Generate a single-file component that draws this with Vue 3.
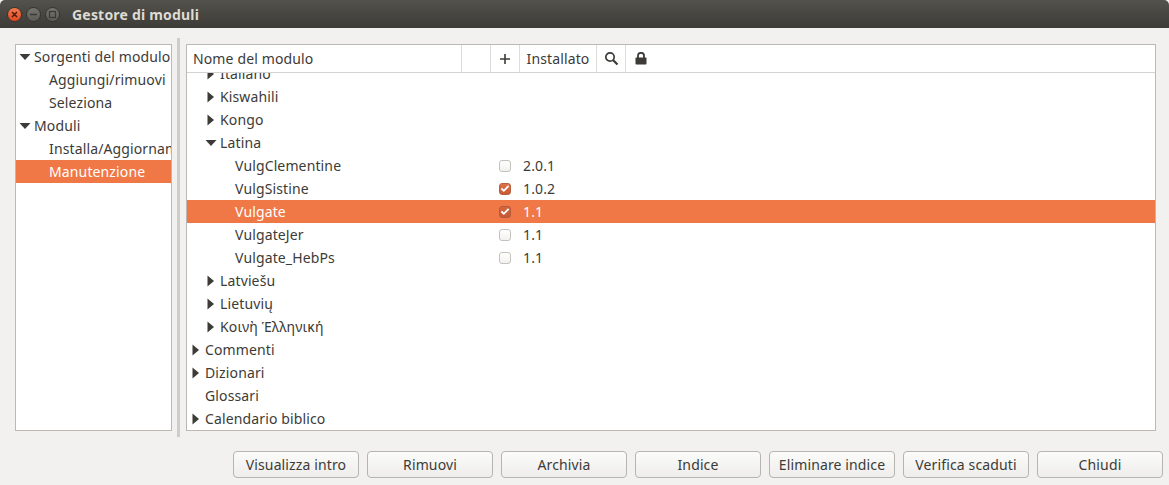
<template>
  <div class="window">
    <div class="titlebar">
      <div class="controls">
        <span class="ctl close">
          <svg width="9" height="9" viewBox="0 0 9 9"><path d="M2 2l5 5M7 2L2 7" stroke="#4a1a0c" stroke-width="1.5" /></svg>
        </span>
        <span class="ctl">
          <svg width="9" height="9" viewBox="0 0 9 9"><path d="M1 4.5h7" stroke="#3a3934" stroke-width="1.4" /></svg>
        </span>
        <span class="ctl">
          <svg width="9" height="9" viewBox="0 0 9 9"><rect x="1.5" y="1.5" width="6" height="6" fill="none" stroke="#3a3934" stroke-width="1.2" /></svg>
        </span>
      </div>
      <span class="title">Gestore di moduli</span>
    </div>

    <div class="content">
      <div class="panes">
        <div class="sidebar">
          <div
            v-for="item in sideItems"
            :key="item.label"
            class="row"
            :class="{ selected: item.selected }"
          >
            <span class="arrow-slot side-slot" :class="{ deep: item.child }">
              <svg v-if="item.open" class="arrow" width="14" height="10" viewBox="0 0 14 10"><path d="M1.5 2h11L7 8z" fill="#3c3b37" /></svg>
            </span>
            <span class="label">{{ item.label }}</span>
          </div>
        </div>

        <div class="handle"></div>

        <div class="tree">
          <div class="header">
            <div class="hcol h-name">Nome del modulo</div>
            <div class="hcol h-blank"></div>
            <div class="hcol h-plus">
              <svg width="12" height="12" viewBox="0 0 12 12"><path d="M6 1v10M1 6h10" stroke="#3c3b37" stroke-width="1.6" /></svg>
            </div>
            <div class="hcol h-inst">Installato</div>
            <div class="hcol h-icon">
              <svg width="15" height="15" viewBox="0 0 15 15"><circle cx="6" cy="6" r="4.2" fill="none" stroke="#3c3b37" stroke-width="1.7" /><path d="M9 9l4.5 4.5" stroke="#3c3b37" stroke-width="2.2" /></svg>
            </div>
            <div class="hcol h-icon h-last">
              <svg width="12" height="13" viewBox="0 0 12 13"><path d="M3 6V3.8a3 3 0 0 1 6 0V6" fill="none" stroke="#3c3b37" stroke-width="1.8" /><rect x="0.5" y="5.5" width="11" height="7" rx="0.8" fill="#3c3b37" /></svg>
            </div>
          </div>
          <div class="body">
            <div class="rows">
              <div
                v-for="r in treeRows"
                :key="r.label"
                class="row"
                :class="{ selected: r.selected }"
              >
                <div class="t-name" :class="'lvl' + r.level">
                  <span class="arrow-slot">
                    <svg v-if="r.state === 'closed'" class="arrow" width="10" height="12" viewBox="0 0 10 12"><path d="M1.5 .5v11L8 6z" fill="#3c3b37" /></svg>
                    <svg v-if="r.state === 'open'" class="arrow" width="14" height="10" viewBox="0 0 14 10"><path d="M1.5 2h11L7 8z" fill="#3c3b37" /></svg>
                  </span>
                  <span class="label">{{ r.label }}</span>
                </div>
                <div v-if="r.version" class="t-check">
                  <span class="check" :class="{ on: r.checked }">
                    <svg v-if="r.checked" width="11" height="11" viewBox="0 0 11 11"><path d="M1.5 5.5l2.7 2.5L9.5 2.5" fill="none" stroke="#fff" stroke-width="2" /></svg>
                  </span>
                </div>
                <div v-if="r.version" class="t-ver">{{ r.version }}</div>
              </div>
            </div>
          </div>
        </div>
      </div>

      <div class="actions">
        <button v-for="b in buttons" :key="b" class="btn">{{ b }}</button>
      </div>
    </div>
  </div>
</template>

<script setup>
const sideItems = [
  { label: "Sorgenti del modulo", open: true },
  { label: "Aggiungi/rimuovi", child: true },
  { label: "Seleziona", child: true },
  { label: "Moduli", open: true },
  { label: "Installa/Aggiornamento", child: true },
  { label: "Manutenzione", child: true, selected: true },
];

const treeRows = [
  { label: "Italiano", level: 1, state: "closed" },
  { label: "Kiswahili", level: 1, state: "closed" },
  { label: "Kongo", level: 1, state: "closed" },
  { label: "Latina", level: 1, state: "open" },
  { label: "VulgClementine", level: 2, version: "2.0.1" },
  { label: "VulgSistine", level: 2, version: "1.0.2", checked: true },
  { label: "Vulgate", level: 2, version: "1.1", checked: true, selected: true },
  { label: "VulgateJer", level: 2, version: "1.1" },
  { label: "Vulgate_HebPs", level: 2, version: "1.1" },
  { label: "Latviešu", level: 1, state: "closed" },
  { label: "Lietuvių", level: 1, state: "closed" },
  { label: "Κοινὴ Ἑλληνική", level: 1, state: "closed" },
  { label: "Commenti", level: 0, state: "closed" },
  { label: "Dizionari", level: 0, state: "closed" },
  { label: "Glossari", level: 0 },
  { label: "Calendario biblico", level: 0, state: "closed" },
];

const buttons = [
  "Visualizza intro",
  "Rimuovi",
  "Archivia",
  "Indice",
  "Eliminare indice",
  "Verifica scaduti",
  "Chiudi",
];
</script>

<style>
html,
body {
  margin: 0;
  background: #f2f1f0;
}
</style>

<style scoped>
.window {
  width: 1169px;
  height: 485px;
  display: flex;
  flex-direction: column;
  overflow: hidden;
  background: #f2f1f0;
  color: #3c3b37;
  font-family: "Noto Sans", "DejaVu Sans", sans-serif;
  font-size: 14px;
  letter-spacing: 0.13px;
}

.titlebar {
  height: 28px;
  flex: none;
  display: flex;
  align-items: center;
  padding-left: 7px;
  box-sizing: border-box;
  background: linear-gradient(#53524c, #3c3b37);
  border-radius: 5px 5px 0 0;
}

.controls {
  display: flex;
  gap: 4px;
}

.ctl {
  width: 15px;
  height: 15px;
  box-sizing: border-box;
  border-radius: 50%;
  display: flex;
  align-items: center;
  justify-content: center;
  background: linear-gradient(#75746e, #5c5b56);
  border: 1px solid #35342f;
}

.ctl.close {
  background: linear-gradient(#f47b4d, #e4481f);
}

.title {
  margin-left: 12px;
  color: #dfdbd2;
  font-size: 14px;
  font-weight: 700;
  letter-spacing: 0.2px;
}

.content {
  flex: 1;
  display: flex;
  flex-direction: column;
  padding: 10px 6px 7px 15px;
  min-height: 0;
}

.panes {
  height: 399px;
  display: flex;
  flex: none;
}

.sidebar {
  width: 157px;
  height: 387px;
  margin-top: 6px;
  box-sizing: border-box;
  background: #fff;
  border: 1px solid #bcb9b4;
  overflow: hidden;
  flex: none;
}

.handle {
  width: 3px;
  flex: none;
  margin: 0 6px 0 5px;
  background: #cfcdc9;
}

.tree {
  width: 970px;
  height: 387px;
  margin-top: 6px;
  box-sizing: border-box;
  background: #fff;
  border: 1px solid #bcb9b4;
  display: flex;
  flex-direction: column;
  flex: none;
}

.header {
  height: 28px;
  flex: none;
  box-sizing: border-box;
  display: flex;
  border-bottom: 1px solid #d5d3cf;
  position: relative;
  z-index: 1;
  background: #fff;
}

.hcol {
  height: 100%;
  box-sizing: border-box;
  display: flex;
  align-items: center;
  justify-content: center;
  border-right: 1px solid #dedcd8;
}

.h-name {
  width: 275px;
  justify-content: flex-start;
  padding-left: 6px;
}

.h-blank,
.h-plus,
.h-icon {
  width: 29px;
}

.h-inst {
  width: 77px;
}

.h-last {
  border-right: none;
}

.body {
  flex: 1;
  overflow: hidden;
}

.rows {
  margin-top: -11px;
}

.row {
  height: 23px;
  display: flex;
  align-items: center;
  white-space: nowrap;
}

.row.selected {
  background: #f07746;
  color: #fff;
}

.arrow-slot {
  width: 18px;
  flex: none;
  display: flex;
  align-items: center;
  justify-content: center;
}

.arrow {
  display: block;
}

.side-slot.deep {
  width: 33px;
}

.t-name {
  width: 301px;
  flex: none;
  display: flex;
  align-items: center;
  box-sizing: border-box;
}

.lvl1 {
  padding-left: 15px;
}

.lvl2 {
  padding-left: 30px;
}

.t-check {
  width: 33px;
  flex: none;
  display: flex;
  justify-content: center;
}

.check {
  width: 12px;
  height: 12px;
  box-sizing: border-box;
  border: 1px solid #c4c2bd;
  border-radius: 3px;
  background: linear-gradient(#fff, #f2f1ef);
  display: flex;
  align-items: center;
  justify-content: center;
}

.check.on {
  background: linear-gradient(#dd7349, #c75a33);
  border-color: #b8603e;
}

.selected .check.on {
  background: linear-gradient(#d4673f, #c25a36);
  border-color: #b9593a;
}

.t-ver {
  margin-left: 2px;
}

.actions {
  flex: 1;
  display: flex;
  justify-content: flex-end;
  gap: 8px;
  padding-top: 14px;
}

.btn {
  width: 126px;
  height: 27px;
  padding: 0;
  box-sizing: border-box;
  border: 1px solid #b7b5b0;
  border-radius: 4px;
  background: linear-gradient(#fbfbfa, #eeedeb);
  color: #3c3b37;
  font: inherit;
  letter-spacing: inherit;
}
</style>
